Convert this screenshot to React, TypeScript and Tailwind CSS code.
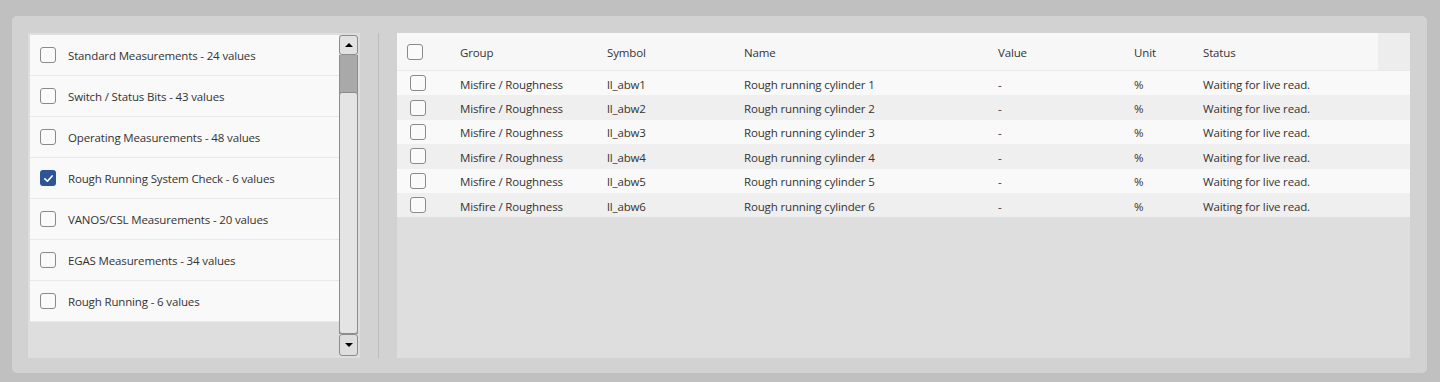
import { FC } from "react";

const groups = [
  { label: "Standard Measurements - 24 values", checked: false },
  { label: "Switch / Status Bits - 43 values", checked: false },
  { label: "Operating Measurements - 48 values", checked: false },
  { label: "Rough Running System Check - 6 values", checked: true },
  { label: "VANOS/CSL Measurements - 20 values", checked: false },
  { label: "EGAS Measurements - 34 values", checked: false },
  { label: "Rough Running - 6 values", checked: false },
];

const rows = [1, 2, 3, 4, 5, 6].map((n) => ({
  group: "Misfire / Roughness",
  symbol: `ll_abw${n}`,
  name: `Rough running cylinder ${n}`,
  value: "-",
  unit: "%",
  status: "Waiting for live read.",
}));

const Box: FC<{ checked?: boolean }> = ({ checked }) =>
  checked ? (
    <div className="w-[16px] h-[16px] rounded-[3px] bg-[#2d5496] flex items-center justify-center">
      <svg width="11" height="11" viewBox="0 0 12 12" fill="none">
        <path d="M2 6.4 L4.8 9 L10 3.2" stroke="white" strokeWidth="1.8" strokeLinecap="round" strokeLinejoin="round" />
      </svg>
    </div>
  ) : (
    <div className="w-[16px] h-[16px] rounded-[3px] border border-[#8a8a8a] bg-[#fafafa]" />
  );

const cols = "grid grid-cols-[63px_147px_137px_254px_136px_69px_1fr] items-center";

const Cell: FC<{ children: string }> = ({ children }) => (
  <span className="translate-y-[0.5px]">{children}</span>
);

const App: FC = () => {
  return (
    <div className="w-[1440px] h-[382px] bg-[#c0c0c0] pt-[16px] pl-[12px] text-[11.5px] tracking-[-0.15px] text-[#333333] font-['Open_Sans',sans-serif]">
      <div className="w-[1415px] h-[357px] bg-[#d2d2d2] rounded-[5px] pt-[17px] pl-[16px] pr-[17px] pb-[15px] flex">
        {/* group list */}
        <div className="w-[332px] h-[325px] bg-[#dedede] p-[2px] flex">
          <div className="w-[309px]">
            {groups.map((g) => (
              <div
                key={g.label}
                className="h-[41px] bg-[#f9f9f9] border-b border-[#e8e8e8] flex items-center gap-[12px] pl-[10px]"
              >
                <Box checked={g.checked} />
                <span className="translate-y-[0.5px]">{g.label}</span>
              </div>
            ))}
          </div>
          <div className="w-[19px] flex flex-col">
            <div className="h-[20px] rounded-[3px] border border-[#8c8c8c] bg-[#e2e2e2] flex items-center justify-center">
              <div className="w-0 h-0 border-l-[4px] border-r-[4px] border-b-[4px] border-l-transparent border-r-transparent border-b-black" />
            </div>
            <div className="flex-1 bg-[#a9a9a9] border-x border-[#8c8c8c] flex flex-col pt-[37px]">
              <div className="flex-1 bg-[#e4e4e4] rounded-[3px] border border-[#8c8c8c] -mx-px" />
            </div>
            <div className="h-[22px] rounded-[3px] border border-[#8c8c8c] bg-[#dedede] flex items-center justify-center">
              <div className="w-0 h-0 border-l-[4px] border-r-[4px] border-t-[4px] border-l-transparent border-r-transparent border-t-black" />
            </div>
          </div>
        </div>

        <div className="mx-[18px] w-px h-[325px] bg-[#bcbcbc]" />

        {/* values table */}
        <div className="flex-1 h-[325px] bg-[#dedede]">
          <div className="flex h-[38px] border-b border-[#e9e9e9]">
            <div className={`${cols} flex-1 bg-[#f7f7f7]`}>
              <div className="pl-[10px]">
                <Box />
              </div>
              <Cell>Group</Cell>
              <Cell>Symbol</Cell>
              <Cell>Name</Cell>
              <Cell>Value</Cell>
              <Cell>Unit</Cell>
              <Cell>Status</Cell>
            </div>
            <div className="w-[32px] bg-[#ededed]" />
          </div>
          {rows.map((r, i) => (
            <div
              key={r.symbol}
              className={`${cols} h-[24.4px] ${i % 2 === 0 ? "bg-[#f9f9f9]" : "bg-[#efefef]"}`}
            >
              <div className="pl-[13px]">
                <Box />
              </div>
              <Cell>{r.group}</Cell>
              <Cell>{r.symbol}</Cell>
              <Cell>{r.name}</Cell>
              <Cell>{r.value}</Cell>
              <Cell>{r.unit}</Cell>
              <Cell>{r.status}</Cell>
            </div>
          ))}
        </div>
      </div>
    </div>
  );
};

export default App;
